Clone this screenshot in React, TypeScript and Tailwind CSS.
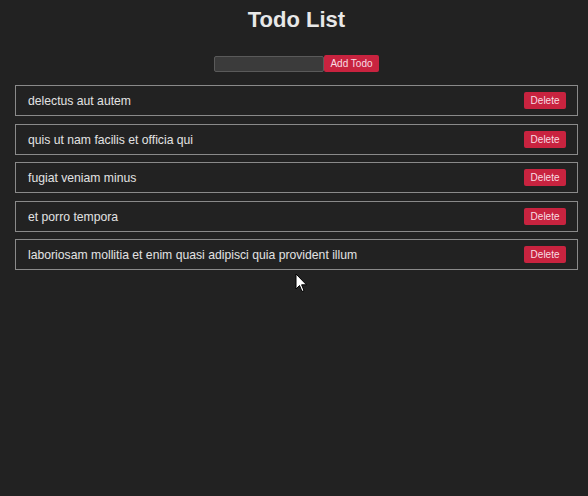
import React from "react";

const todos = [
  "delectus aut autem",
  "quis ut nam facilis et officia qui",
  "fugiat veniam minus",
  "et porro tempora",
  "laboriosam mollitia et enim quasi adipisci quia provident illum",
];

export default function App() {
  return (
    <div
      className="relative w-[588px] h-[496px] bg-[#222222] overflow-hidden pl-[15px] pr-[10px]"
      style={{ fontFamily: '"Liberation Sans", Arial, sans-serif' }}
    >
      <h1 className="pt-[7px] text-center text-[22px] leading-[26px] font-bold text-[#e8e8e8]">
        Todo List
      </h1>
      <div className="mt-[22px] flex justify-center items-center">
        <input
          type="text"
          className="w-[110px] h-[16px] bg-[#3b3b3b] border border-[#5a5a5a] rounded-[2px] outline-none"
        />
        <button className="h-[17px] px-[6px] bg-[#c8233f] text-[#f8dde3] text-[10px] leading-[17px] rounded-[2px]">
          Add Todo
        </button>
      </div>
      <ul className="mt-[13px] flex flex-col gap-[7.5px]">
        {todos.map((t) => (
          <li
            key={t}
            className="h-[31px] border border-[#8a8a8a] flex items-center justify-between pl-[12px] pr-[11px]"
          >
            <span className="pt-[1px] text-[12.2px] leading-[14px] text-[#e2e2e2]">{t}</span>
            <button className="h-[17px] px-[6.5px] bg-[#c8233f] text-[#f8dde3] text-[10px] leading-[17px] rounded-[2px]">
              Delete
            </button>
          </li>
        ))}
      </ul>
      <svg
        className="absolute left-[295px] top-[273px]"
        width="13"
        height="20"
        viewBox="0 0 13 20"
      >
        <path
          d="M1 1 L1 16 L4.5 12.5 L7 18.5 L9 17.6 L6.6 11.8 L11.5 11.8 Z"
          fill="#ffffff"
          stroke="#000000"
          strokeWidth="1"
          strokeLinejoin="round"
        />
      </svg>
    </div>
  );
}
